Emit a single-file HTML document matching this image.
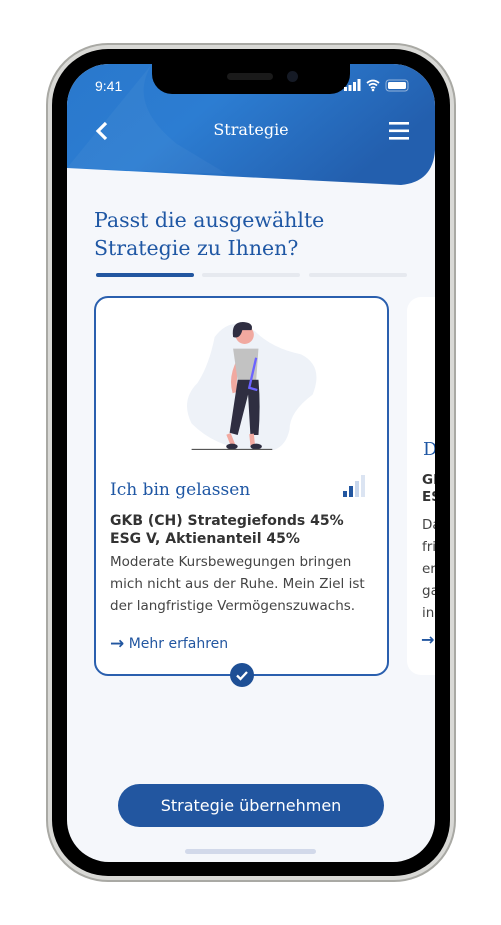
<!DOCTYPE html>
<html><head><meta charset="utf-8"><style>
*{margin:0;padding:0;box-sizing:border-box}
body{width:501px;height:925px;background:#fff;position:relative;overflow:hidden;font-family:"DejaVu Sans","Liberation Sans",sans-serif}
.frame{position:absolute;left:46px;top:43px;width:410px;height:839px;border-radius:62px;background:#d9d9d6;border:2px solid #a9a9a4}
.bezel{position:absolute;left:52px;top:49px;width:398px;height:827px;border-radius:56px;background:#000}
.screen{position:absolute;left:67px;top:64px;width:368px;height:798px;border-radius:42px;background:#f5f7fb;overflow:hidden}
.notch{position:absolute;left:85px;top:0;width:198px;height:30px;background:#000;border-bottom-left-radius:20px;border-bottom-right-radius:20px}
.serif{font-family:"DejaVu Serif","Liberation Serif",serif}
.t{position:absolute}
</style></head><body>
<div class="frame"></div>
<div class="bezel"></div>
<div class="screen">
 <svg class="t" style="left:0;top:0" width="368" height="130">
  <defs><linearGradient id="g" x1="0" y1="0" x2="1" y2="0.4"><stop offset="0" stop-color="#2a78cc"/><stop offset="0.45" stop-color="#2c7dd2"/><stop offset="1" stop-color="#235fae"/></linearGradient></defs>
  <path d="M0 0H368V86Q366 118 334 121L0 104Z" fill="url(#g)"/>
  <path d="M85 0Q60 40 110 80L160 110L0 104Z" fill="#ffffff" opacity="0.04"/>
 </svg>
 <div class="notch"></div>
 <div style="position:absolute;left:160px;top:9px;width:46px;height:7px;border-radius:4px;background:#1a1a1a"></div>
 <div style="position:absolute;left:220px;top:7px;width:11px;height:11px;border-radius:50%;background:#151a25"></div>
 <div class="t" style="left:28px;top:14px;color:#fff;font-size:14px;font-family:'Liberation Sans',sans-serif">9:41</div>
 <svg class="t" style="left:277px;top:15px" width="70" height="14">
  <rect x="0" y="8" width="3" height="4" fill="#fff"/><rect x="4.5" y="6" width="3" height="6" fill="#fff"/><rect x="9" y="3" width="3" height="9" fill="#fff"/><rect x="13.5" y="0" width="3" height="12" fill="#fff"/>
  <path d="M23 4Q29 -1 35 4M25 6.5Q29 3 33 6.5M27 9Q29 7.5 31 9" stroke="#fff" stroke-width="1.8" fill="none"/><circle cx="29" cy="11" r="1.3" fill="#fff"/>
  <rect x="42" y="1" width="22" height="11" rx="3" fill="none" stroke="#fff" stroke-opacity=".5"/><rect x="44" y="3" width="18" height="7" rx="1.5" fill="#fff"/>
 </svg>
 <svg class="t" style="left:27px;top:57px" width="16" height="20"><path d="M12 2L4 10L12 18" stroke="#fff" stroke-width="3.2" fill="none"/></svg>
 <div class="t serif" style="left:0;width:368px;top:56px;text-align:center;color:#fff;font-size:16px">Strategie</div>
 <svg class="t" style="left:322px;top:58px" width="20" height="18"><rect y="0" width="20" height="2.6" fill="#fff"/><rect y="7.5" width="20" height="2.6" fill="#fff"/><rect y="15" width="20" height="2.6" fill="#fff"/></svg>
 <div class="t serif" style="left:27px;top:142px;color:#1f57a4;font-size:20.5px;line-height:28px">Passt die ausgewählte<br>Strategie zu Ihnen?</div>
 <div class="t" style="left:29px;top:209px;width:98px;height:4px;border-radius:2px;background:#2256a0"></div>
 <div class="t" style="left:135px;top:209px;width:98px;height:4px;border-radius:2px;background:#e6e9ef"></div>
 <div class="t" style="left:242px;top:209px;width:98px;height:4px;border-radius:2px;background:#e6e9ef"></div>
 <div class="t" style="left:340px;top:233px;width:50px;height:378px;border-radius:14px;background:#fff"></div>
 <div class="t serif" style="left:356px;top:375px;color:#1f57a4;font-size:18px">D</div>
 <div class="t" style="left:355px;top:408px;font-size:13.5px;font-weight:bold;color:#333;line-height:17px">GI<br>ES</div>
 <div class="t" style="left:355px;top:450px;font-size:13.5px;color:#444;line-height:22px">Da<br>fri<br>er<br>ga<br>in</div>
 <div class="t" style="left:354px;top:566px;font-size:16px;color:#2256a0;font-weight:bold">→</div>
 <div class="t" style="left:27px;top:232px;width:295px;height:380px;border:2px solid #2a5fae;border-radius:14px;background:#fff"></div>
 <svg class="t" style="left:113px;top:250px" width="150" height="136" viewBox="0 0 130 118">
  <path d="M30 20Q45 0 65 15Q80 30 105 35Q125 45 115 70Q95 85 95 100Q90 125 60 118Q30 115 10 95Q0 75 15 60Q25 45 30 20Z" fill="#eef2f8"/>
  <path d="M52 40Q44 55 48 68" stroke="#f1a9a0" stroke-width="5" fill="none"/>
  <path d="M46 30L68 30L66 58L50 58Z" fill="#c2c2c2"/>
  <circle cx="56" cy="18" r="8" fill="#f1a9a0"/>
  <path d="M46 20Q44 6 56 7Q64 8 62 14L54 14Q52 22 46 20Z" fill="#2f2e41"/>
  <path d="M50 57L68 57Q70 80 68 105L61 105L59 70L50 105L43 103Z" fill="#2f2e41"/>
  <path d="M66 38L60 64L67 66" stroke="#6c63ff" stroke-width="2" fill="none"/>
  <path d="M42 104L46 114M62 104L63 114" stroke="#f1a9a0" stroke-width="4"/>
  <ellipse cx="45" cy="115" rx="5" ry="2.5" fill="#2f2e41"/><ellipse cx="66" cy="115" rx="5" ry="2.5" fill="#2f2e41"/>
  <rect x="10" y="117" width="70" height="1.2" fill="#555"/>
 </svg>
 <div class="t serif" style="left:43px;top:416px;color:#1f57a4;font-size:17px">Ich bin gelassen</div>
 <svg class="t" style="left:276px;top:410px" width="30" height="24"><rect x="0" y="17" width="4" height="6" fill="#2256a0"/><rect x="6" y="12" width="4" height="11" fill="#2256a0"/><rect x="12" y="7" width="4" height="16" fill="#c7d6ec"/><rect x="18" y="1" width="4" height="22" fill="#dbe4f2"/></svg>
 <div class="t" style="left:43px;top:448px;font-size:14px;font-weight:bold;color:#333;line-height:18px">GKB (CH) Strategiefonds 45%<br>ESG V, Aktienanteil 45%</div>
 <div class="t" style="left:43px;top:487px;font-size:13.5px;color:#444;line-height:22px">Moderate Kursbewegungen bringen<br>mich nicht aus der Ruhe. Mein Ziel ist<br>der langfristige Vermögenszuwachs.</div>
 <div class="t" style="left:43px;top:569px;font-size:14px;color:#2256a0"><span style="font-size:17px;position:relative;top:1px;font-weight:bold">→</span> Mehr erfahren</div>
 <svg class="t" style="left:163px;top:599px" width="24" height="24"><circle cx="12" cy="12" r="12" fill="#1e4f95"/><path d="M7 12.5L10.5 16L17 9" stroke="#fff" stroke-width="2.3" fill="none"/></svg>
 <div class="t" style="left:51px;top:720px;width:266px;height:43px;border-radius:22px;background:#2256a0;color:#fff;font-size:16px;text-align:center;line-height:43px">Strategie übernehmen</div>
 <div class="t" style="left:118px;top:785px;width:131px;height:5px;border-radius:3px;background:#d2d9ea"></div>
</div>
</body></html>
